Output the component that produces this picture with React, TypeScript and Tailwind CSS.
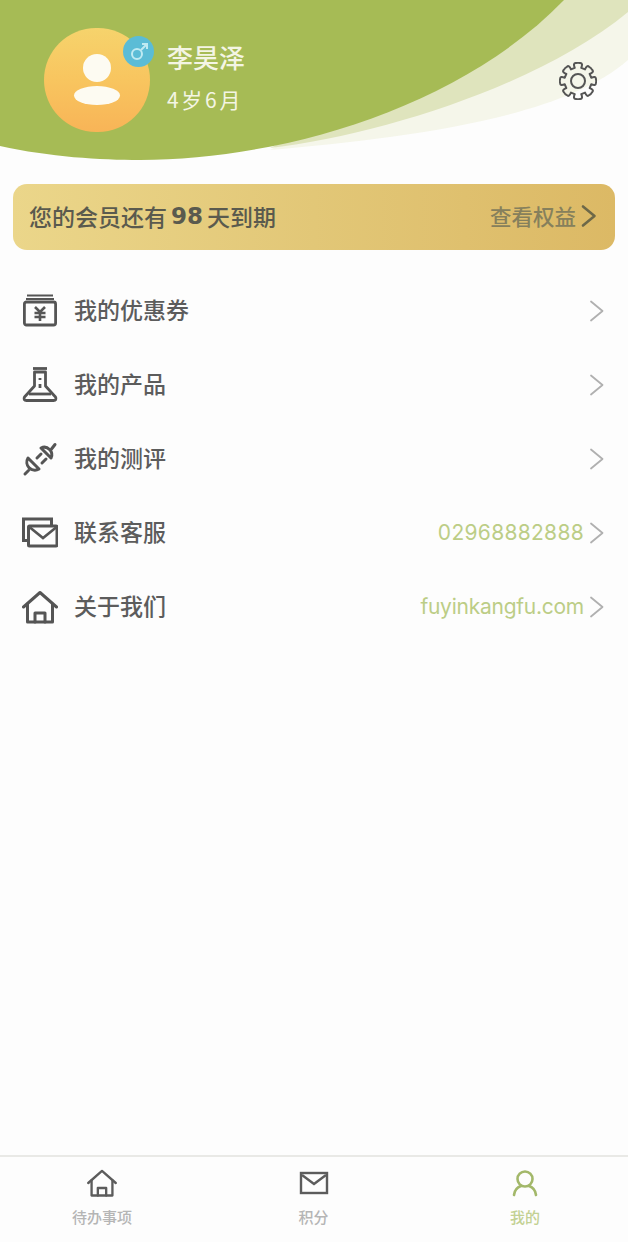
import React from "react";

const cjk = "font-['Noto_Sans_CJK_SC','Noto_Sans',sans-serif]";

function Chevron({ className = "", weight = 1.8 }: { className?: string; weight?: number }) {
  return (
    <svg width="16" height="24" viewBox="0 0 16 24" fill="none" className={className}>
      <path d="M2 2.5 L13.5 12 L2 21.5" stroke="currentColor" strokeWidth={weight} strokeLinecap="round" strokeLinejoin="round" />
    </svg>
  );
}

function CouponIcon() {
  return (
    <svg width="36" height="36" viewBox="0 0 36 36" fill="none" stroke="#555" strokeWidth="2.8">
      <path d="M5 2.5H31" strokeWidth="2" />
      <path d="M4 6H32" strokeWidth="2" />
      <rect x="2.4" y="9" width="31.2" height="23" rx="2" />
      <path d="M13 14L18 19L23 14M18 19V28M12.5 20H23.5M12.5 24H23.5" strokeWidth="2.6" />
    </svg>
  );
}

function FlaskIcon() {
  return (
    <svg width="36" height="36" viewBox="0 0 36 36" fill="none" stroke="#555" strokeWidth="2.8" strokeLinejoin="round">
      <path d="M11 1.5H25" />
      <path d="M12.5 5V19L2.5 30C1.4 32 2.2 33.5 4.5 33.5H31.5C33.8 33.5 34.6 32 33.5 30L23.5 19V5H12.5Z" />
      <path d="M7 27H29" />
      <path d="M18 11V13M18 17V21" strokeWidth="2.8" />
    </svg>
  );
}

function PlugIcon() {
  return (
    <svg width="36" height="36" viewBox="0 0 36 36" fill="none" stroke="#555" strokeWidth="3" strokeLinecap="round" strokeLinejoin="round">
      <path d="M3 33L6.5 29.5" />
      <path d="M6 17L17 28A8 8 0 0 1 6 17Z" />
      <path d="M19 7L29 17A7.5 7.5 0 0 0 19 7Z" />
      <path d="M19 13L15 17M24 18L20 22" />
      <path d="M29.5 8L33 3.5" />
    </svg>
  );
}

function MailsIcon() {
  return (
    <svg width="36" height="36" viewBox="0 0 36 36" fill="none" stroke="#555" strokeWidth="3">
      <path d="M6 25.5H1.5V4H29.5V10" />
      <rect x="6.5" y="11" width="28.5" height="20" rx="1" />
      <path d="M8 12.5L21 23L34 12.5" strokeWidth="2.6" />
    </svg>
  );
}

function HomeIcon({ size = 36, stroke = "#555", width = 3 }: { size?: number; stroke?: string; width?: number }) {
  return (
    <svg width={size} height={size} viewBox="0 0 36 36" fill="none" stroke={stroke} strokeWidth={width} strokeLinecap="round" strokeLinejoin="round">
      <path d="M1.5 18L18 3.5L34.5 18" />
      <path d="M5.5 15V33H30.5V15" />
      <path d="M13 33V24H23V33" />
    </svg>
  );
}

function GearIcon() {
  // Eight-toothed cog outline built from its tooth points
  const teeth = 8;
  const outer = 18;
  const inner = 13.6;
  const pts: string[] = [];
  for (let i = 0; i < teeth; i++) {
    const a = (i * 2 * Math.PI) / teeth;
    const w = Math.PI / teeth;
    const p = (r: number, t: number) => `${(19 + r * Math.cos(t)).toFixed(2)} ${(19 + r * Math.sin(t)).toFixed(2)}`;
    pts.push(`${i === 0 ? "M" : "L"}${p(inner, a - w * 0.62)}`);
    pts.push(`Q${p(outer + 0.8, a - w * 0.72)} ${p(outer, a - w * 0.3)}`);
    pts.push(`Q${p(outer + 0.6, a)} ${p(outer, a + w * 0.3)}`);
    pts.push(`Q${p(outer + 0.8, a + w * 0.72)} ${p(inner, a + w * 0.62)}`);
  }
  return (
    <svg width="38" height="38" viewBox="0 0 38 38" fill="none" stroke="#555" strokeWidth="2" strokeLinejoin="round">
      <path d={pts.join(" ") + "Z"} />
      <circle cx="19" cy="19" r="7" />
    </svg>
  );
}

const rows = [
  { icon: <CouponIcon />, label: "我的优惠券" },
  { icon: <FlaskIcon />, label: "我的产品" },
  { icon: <PlugIcon />, label: "我的测评" },
  { icon: <MailsIcon />, label: "联系客服", value: "02968882888", spacing: "tracking-[0.3px]" },
  { icon: <HomeIcon />, label: "关于我们", value: "fuyinkangfu.com", spacing: "tracking-[-0.25px]" },
];

export default function App() {
  return (
    <div className={`flex h-[1242px] w-[628px] flex-col overflow-hidden bg-[#fdfdfd] ${cjk}`}>
      {/* Header with layered green swoosh */}
      <header className="relative h-[161px] shrink-0">
        <svg className="absolute inset-0" width="628" height="161" viewBox="0 0 628 161">
          <path d="M270 150 C 400 138, 560 120, 628 60 V0 H560 Z" fill="#f5f6ea" />
          <path d="M270 148 C 380 135, 540 85, 628 12 V0 H560 Z" fill="#dfe4bd" />
          <path d="M0 146 C 50 157, 100 160, 140 160 C 280 160, 460 108, 564 0 H0 Z" fill="#a6bb55" />
        </svg>
        <div className="relative flex items-start pl-[44px] pr-[31px] pt-[28px]">
          <div className="relative h-[104px] w-[106px] shrink-0 rounded-full bg-gradient-to-b from-[#f6d36c] via-[#f8c55f] to-[#f8b457]">
            <div className="absolute left-[39px] top-[26px] h-[28px] w-[28px] rounded-full bg-[#fdfbf2]" />
            <div className="absolute left-[30px] top-[58px] h-[19px] w-[46px] rounded-[50%] bg-[#fdfbf2]" />
            <div className="absolute left-[79px] top-[8px] flex h-[31px] w-[31px] items-center justify-center rounded-full bg-[#5bbcd6]">
              <svg width="20" height="20" viewBox="0 0 20 20" fill="none" stroke="#bfeaf2" strokeWidth="2">
                <circle cx="8" cy="12" r="5" />
                <path d="M12 8L18 2M13 2H18V7" />
              </svg>
            </div>
          </div>
          <div className="ml-[17px] flex flex-col pt-[10px] text-[#f4f5e4]">
            <span className="text-[26px] font-medium leading-[38px]">李昊泽</span>
            <span className="mt-[8px] text-[21px] leading-[30px] tracking-[2.7px]">4岁6月</span>
          </div>
          <div className="ml-auto mt-[34px]">
            <GearIcon />
          </div>
        </div>
      </header>

      {/* Membership banner */}
      <section className="mx-[13px] mt-[23px] flex h-[66px] shrink-0 items-center justify-between rounded-[14px] bg-gradient-to-r from-[#ebd68a] via-[#e2c777] to-[#dcb965] pb-[2px] pl-[16px] pr-[18px] text-[23px] font-medium text-[#5a5a4e]">
        <span className="flex items-center">
          您的会员还有
          <span className="mx-[4px] font-['DejaVu_Sans'] font-bold">98</span>
          天到期
        </span>
        <span className="flex items-center gap-[5px] text-[21.5px] text-[#86805c]">
          查看权益
          <Chevron className="text-[#6d6848]" weight={2.6} />
        </span>
      </section>

      {/* Menu list */}
      <ul className="mt-[24px] flex flex-col">
        {rows.map((r) => (
          <li key={r.label} className="flex h-[74px] items-center pl-[22px] pr-[23px]">
            <span className="w-[36px] shrink-0">{r.icon}</span>
            <span className="ml-[16px] pb-[4px] text-[23px] font-medium text-[#5c5c5c]">{r.label}</span>
            {r.value && (
              <span className={`ml-auto font-['Inter'] text-[21px] text-[#bccd86] ${r.spacing}`}>{r.value}</span>
            )}
            <Chevron className={`${r.value ? "ml-[5px]" : "ml-auto"} text-[#b0b0b0]`} />
          </li>
        ))}
      </ul>

      {/* Bottom tab bar */}
      <nav className="mt-auto flex h-[87px] shrink-0 justify-between border-t-2 border-[#e9e9e6] pl-[42px] pr-[43px] pt-[11px] text-[15px] font-medium">
        <div className="flex w-[120px] flex-col items-center gap-[8px] text-[#b5b5b5]">
          <HomeIcon size={30} stroke="#5c5c5c" width={2.8} />
          <span className="leading-[22px]">待办事项</span>
        </div>
        <div className="flex w-[120px] flex-col items-center gap-[8px] text-[#b5b5b5]">
          <svg width="30" height="30" viewBox="0 0 30 30" fill="none" stroke="#5c5c5c" strokeWidth="2.4">
            <rect x="2" y="5" width="26" height="20" />
            <path d="M3 7L15 16L27 7" />
          </svg>
          <span className="leading-[22px]">积分</span>
        </div>
        <div className="flex w-[120px] flex-col items-center gap-[8px] text-[#c3d193]">
          <svg width="30" height="30" viewBox="0 0 30 30" fill="none" stroke="#a3b86a" strokeWidth="2.6" strokeLinecap="round">
            <circle cx="15" cy="11" r="7.5" />
            <path d="M4 27C4.5 22 8 19 11 18M26 27C25.5 22 22 19 19 18" />
          </svg>
          <span className="leading-[22px]">我的</span>
        </div>
      </nav>
    </div>
  );
}
